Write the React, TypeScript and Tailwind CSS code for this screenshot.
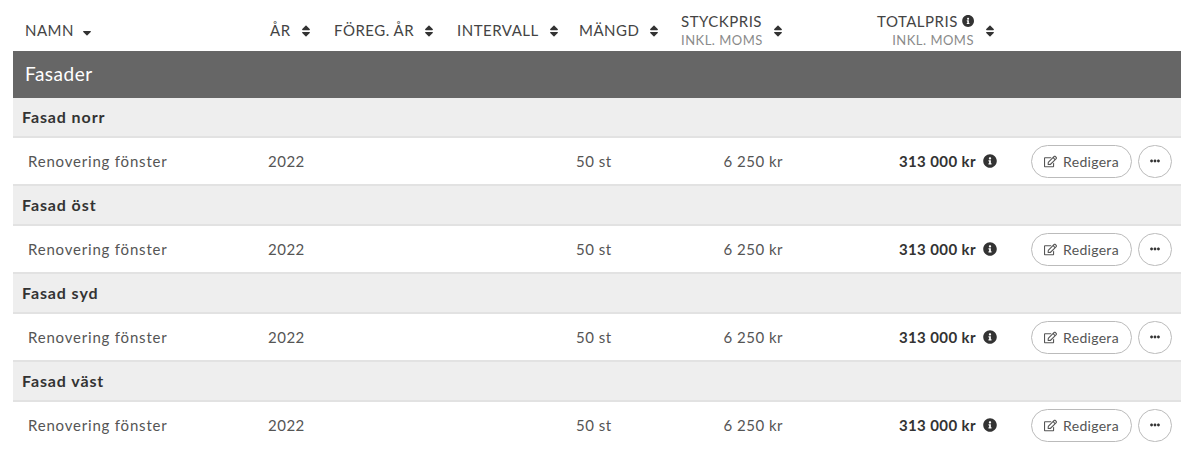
import { FaInfoCircle, FaRegEdit, FaEllipsisH, FaSort, FaSortDown } from "react-icons/fa"

const sections = ["Fasad norr", "Fasad öst", "Fasad syd", "Fasad väst"]

const SortLabel = ({ label, width }: { label: string; width: string }) => (
  <div className={`flex items-center gap-2 whitespace-nowrap ${width}`}>
    <span>{label}</span>
    <FaSort className="text-[14px] text-[#333]" />
  </div>
)

const Row = ({ last }: { last: boolean }) => (
  <div className={`flex h-[48px] items-center border-b-2 text-[15px] tracking-[0.5px] text-[#555] ${last ? "border-transparent" : "border-[#e2e2e2]"}`}>
    <span className="w-[255px] pl-[15px] tracking-[0.8px]">Renovering fönster</span>
    <span className="w-[308px]">2022</span>
    <span className="w-[100px]">50 st</span>
    <span className="w-[107px] text-right">6 250 kr</span>
    <span className="w-[193px] text-right font-bold tracking-[0.4px] text-[#333]">313 000 kr</span>
    <FaInfoCircle className="ml-[7px] text-[14px] text-[#333]" />
    <div className="ml-[34px] flex items-center gap-[6px]">
      <button
        type="button"
        className="flex h-[33px] w-[101px] items-center justify-center gap-[6px] rounded-full border border-[#bbb] text-[14px] tracking-[0.3px] text-[#555]"
      >
        <FaRegEdit className="text-[13px]" />
        Redigera
      </button>
      <button
        type="button"
        className="flex h-[33px] w-[34px] items-center justify-center rounded-full border border-[#bbb] text-[#333]"
      >
        <FaEllipsisH className="text-[10px]" />
      </button>
    </div>
  </div>
)

export default function App() {
  return (
    <div className="h-[459px] overflow-hidden bg-white pr-[10px] pl-[13px] font-['Lato',sans-serif]">
      <div className="flex h-[51px] items-center pt-[10px] text-[15px] tracking-[0.5px] text-[#444]">
        <div className="flex w-[257px] items-center gap-[6px] pl-[12px]">
          <span>NAMN</span>
          <FaSortDown className="mb-[2px] text-[14px] text-[#333]" />
        </div>
        <SortLabel label="ÅR" width="w-[64px]" />
        <SortLabel label="FÖREG. ÅR" width="w-[123px]" />
        <SortLabel label="INTERVALL" width="w-[122px]" />
        <SortLabel label="MÄNGD" width="w-[102px]" />
        <div className="flex w-[196px] items-center gap-[10px]">
          <div className="w-[80px] whitespace-nowrap text-right leading-[19px]">
            <div>STYCKPRIS</div>
            <div className="text-[13px] text-[#8a8a8a]">INKL. MOMS</div>
          </div>
          <FaSort className="text-[14px] text-[#333]" />
        </div>
        <div className="flex items-center gap-[9px]">
          <div className="w-[97px] whitespace-nowrap text-right leading-[19px]">
            <div className="flex items-center justify-end gap-[4px]">
              TOTALPRIS
              <FaInfoCircle className="text-[14px] text-[#333]" />
            </div>
            <div className="text-[13px] text-[#8a8a8a]">INKL. MOMS</div>
          </div>
          <FaSort className="text-[14px] text-[#333]" />
        </div>
      </div>
      <div className="flex h-[47px] items-center bg-[#666] pl-[12px] text-[19px] tracking-[0.5px] text-white">Fasader</div>
      {sections.map((name, i) => (
        <div key={name}>
          <div className="flex h-[40px] items-center border-b-2 border-[#e2e2e2] bg-[#eee] pl-[9px] text-[16px] font-bold tracking-[0.9px] text-[#333]">
            {name}
          </div>
          <Row last={i === sections.length - 1} />
        </div>
      ))}
    </div>
  )
}
